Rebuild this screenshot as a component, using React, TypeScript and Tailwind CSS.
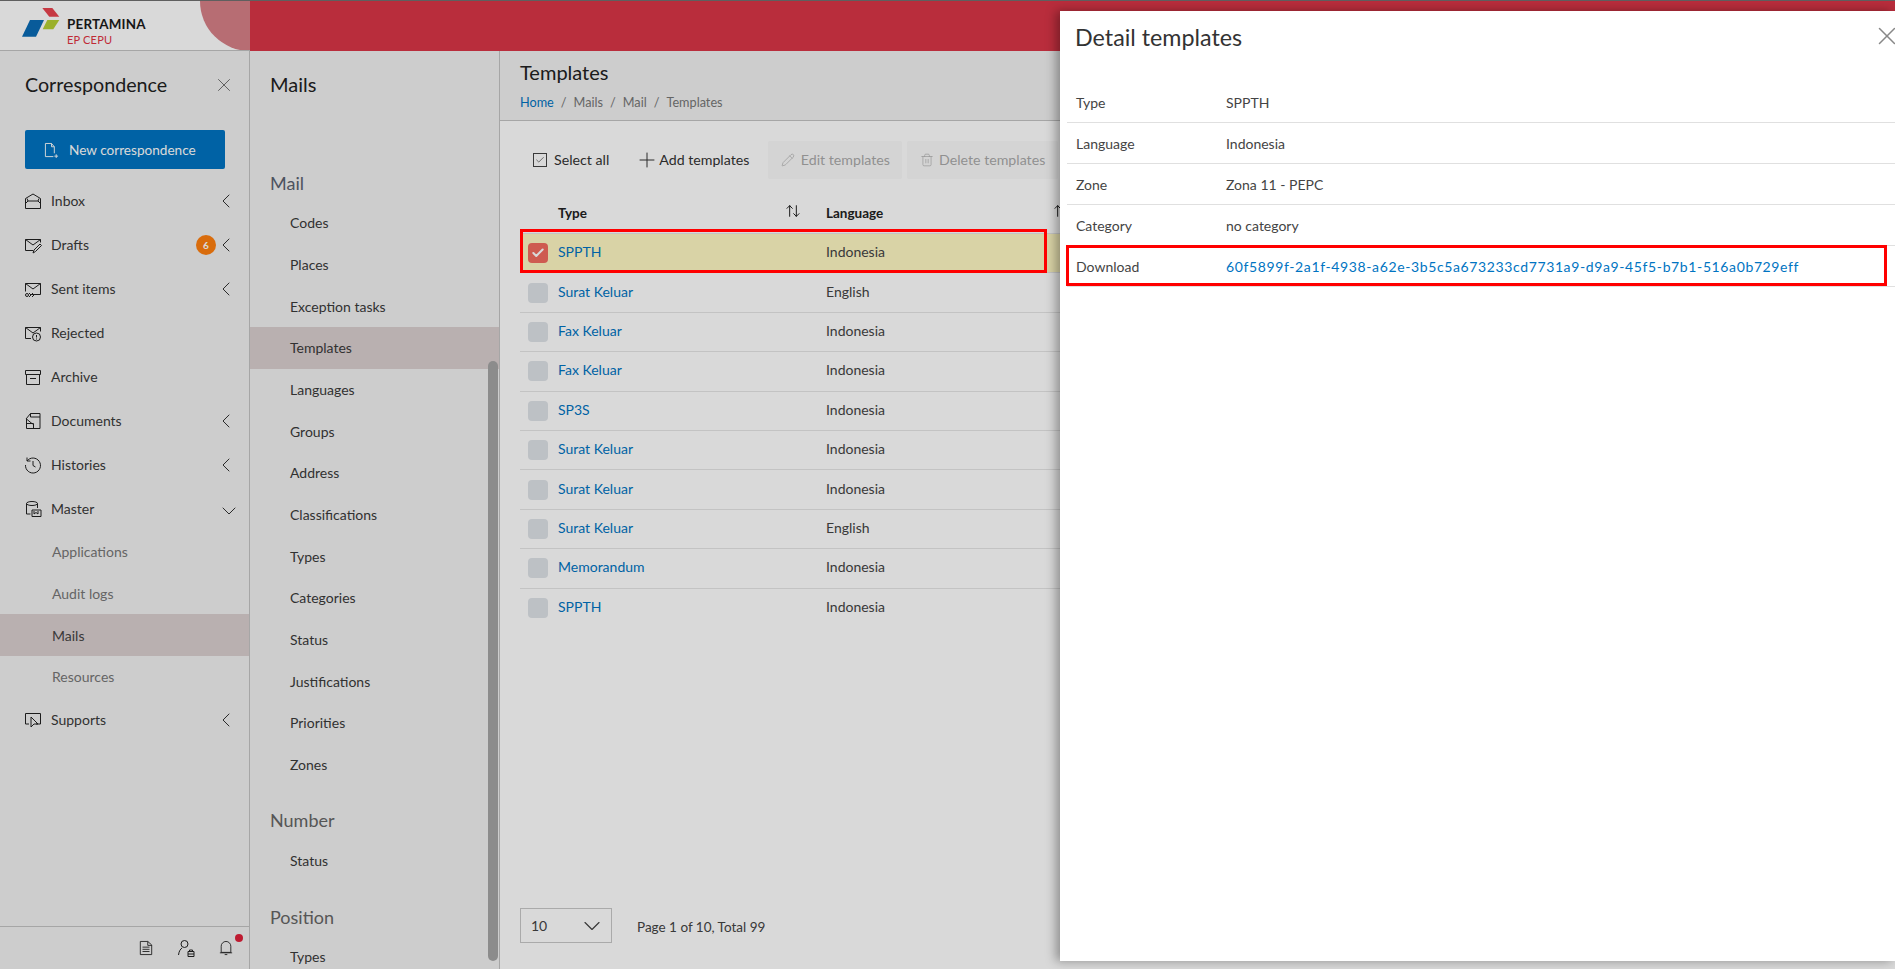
import { ChevronDown, ChevronLeft, Plus, X, ArrowUpDown, Check, Pencil, Trash2 } from "lucide-react";
import type { ReactNode } from "react";

const stroke = { fill: "none", stroke: "currentColor", strokeWidth: 1 };

function Ico({ children }: { children: ReactNode }) {
  return (
    <svg viewBox="0 0 18 18" className="size-[18px] shrink-0" {...stroke}>
      {children}
    </svg>
  );
}

const icons: Record<string, ReactNode> = {
  Inbox: <Ico><path d="M1.5 6.500 9 2l7.500 4.500v10h-15zM1.500 11.500 4 9h10l2.500 2.500M4 9 3 6.500M14 9l1-2.500" /></Ico>,
  Drafts: <Ico><path d="M9 14.500H1.500v-11h15v3M1.500 3.500 9 9l7.500-5.500M9 17l1-3 6-6 1.500 1.500-6 6z" /></Ico>,
  "Sent items": <Ico><path d="M6 14.500h10.500v-11h-15v8M1.500 3.500 9 9l7.500-5.500" /><path d="M5 13l2 2-2 2M8 13l2 2-2 2" /><circle cx="3" cy="15" r="1.500" /></Ico>,
  Rejected: <Ico><path d="M7 14.500H1.500v-11h15v4M1.500 3.500 9 9l7.500-5.500" /><circle cx="12.500" cy="13" r="4" /><path d="M12.500 11v2.500M12.500 14.500v1" /></Ico>,
  Archive: <Ico><path d="M1.500 2.500h15v4h-15zM2.500 6.500v10h13v-10M6 10.500h6" /></Ico>,
  Documents: <Ico><path d="M2 7 6.500 1.500h9.500v15H2.500V7zM6.500 1.500V5h9.500M2.500 7l6 5M2.500 11.500h7v5" /></Ico>,
  Histories: <Ico><path d="M3 5a7.500 7.500 0 1 1-1.500 4M3 1.500V5h3.500M9 5v4.500l2.500 1.500" /></Ico>,
  Master: <Ico><ellipse cx="8" cy="3.500" rx="5.500" ry="2" /><path d="M2.500 3.500V14h4M13.500 3.500V8M8 16.500V10h9v6.500zM10 11v3l2-1.500 2 1.500v-3" /></Ico>,
  Supports: <Ico><path d="M5 13H1.500V2.500h15V13H12M7 6v10l3-3h4z" /></Ico>,
};

const mainNav = [
  { label: "Inbox", chevron: true },
  { label: "Drafts", chevron: true, badge: "6" },
  { label: "Sent items", chevron: true },
  { label: "Rejected" },
  { label: "Archive" },
  { label: "Documents", chevron: true },
  { label: "Histories", chevron: true },
];

const mailLinks = ["Codes", "Places", "Exception tasks", "Templates", "Languages", "Groups", "Address", "Classifications", "Types", "Categories", "Status", "Justifications", "Priorities", "Zones"];

const rows = [
  ["SPPTH", "Indonesia"],
  ["Surat Keluar", "English"],
  ["Fax Keluar", "Indonesia"],
  ["Fax Keluar", "Indonesia"],
  ["SP3S", "Indonesia"],
  ["Surat Keluar", "Indonesia"],
  ["Surat Keluar", "Indonesia"],
  ["Surat Keluar", "English"],
  ["Memorandum", "Indonesia"],
  ["SPPTH", "Indonesia"],
];

const details = [
  ["Type", "SPPTH"],
  ["Language", "Indonesia"],
  ["Zone", "Zona 11 - PEPC"],
  ["Category", "no category"],
];

function Logo() {
  return (
    <div className="flex items-start gap-[7px] pl-[22px] pt-[6px]">
      <svg viewBox="0 0 38 30" className="h-[30px] w-[38px] shrink-0">
        <path d="M20.300 1h10l7 8.700h-10z" fill="#e9444f" />
        <path d="M25.300 13h12l-6 9.300H20.700z" fill="#b5cf33" />
        <path d="M8 13h14l-8 16.700H0z" fill="#0a6cb5" />
      </svg>
      <div className="mt-[10px] flex flex-col">
        <span className="text-[13.400px] font-bold leading-[15px] tracking-[0.2px] text-[#1b1b1b]">PERTAMINA</span>
        <span className="text-[11px] leading-[16px] tracking-[0.2px] text-[#e2333f]">EP CEPU</span>
      </div>
    </div>
  );
}

function Sidebar() {
  return (
    <aside className="flex h-full w-[250px] shrink-0 flex-col border-r border-[#c4c4c4] bg-[#f1f1f1]">
      <div className="flex items-center justify-between pl-[25px] pr-[14px] pt-[20px]">
        <h2 className="text-[19.700px] leading-[28px] text-[#222]">Correspondence</h2>
        <X className="size-[22px] text-[#666]" strokeWidth={1} />
      </div>
      <button type="button" className="ml-[25px] mt-[31px] flex h-[39px] w-[200px] items-center gap-[10px] rounded-[2px] bg-[#0074c2] pl-[19px] pt-[1px] text-[13.600px] text-white">
        <svg viewBox="0 0 16 18" className="h-[17px] w-[15px]" {...stroke}>
          <path d="M10 15.500H1.500v-14H8l3 3.500v7M8 1.500V5h3M13 13v4M11 15h4" />
        </svg>
        New correspondence
      </button>
      <nav className="mt-[10px] flex flex-col text-[14px] text-[#3a3a3a]">
        {mainNav.map((item) => (
          <div key={item.label} className="flex h-[44px] items-center pl-[24px] pr-[11px]">
            <span className="mr-[9px] text-[#222]">{icons[item.label]}</span>
            <span className="flex-1 pb-[1px]">{item.label}</span>
            {item.badge && (
              <span className="-mr-[2px] grid size-[20px] place-items-center rounded-full bg-[#ff7f0f] text-[10px] font-bold text-white">{item.badge}</span>
            )}
            {item.chevron && <ChevronLeft className="size-[24px] text-[#333]" strokeWidth={1} />}
          </div>
        ))}
        <div className="flex h-[44px] items-center pl-[24px] pr-[8px]">
          <span className="mr-[9px] text-[#222]">{icons.Master}</span>
          <span className="flex-1 pb-[1px]">Master</span>
          <ChevronDown className="mt-[3px] size-[24px] text-[#333]" strokeWidth={1} />
        </div>
        <div className="flex flex-col text-[#777]">
          <div className="flex h-[41.700px] items-center pl-[52px]">Applications</div>
          <div className="flex h-[41.700px] items-center pl-[52px]">Audit logs</div>
          <div className="flex h-[41.700px] items-center bg-[#dacfcf] pl-[52px] text-[#444]">Mails</div>
          <div className="flex h-[41.700px] items-center pl-[52px]">Resources</div>
        </div>
        <div className="flex h-[44px] items-center pl-[24px] pr-[11px]">
          <span className="mr-[9px] text-[#222]">{icons.Supports}</span>
          <span className="flex-1">Supports</span>
          <ChevronLeft className="size-[24px] text-[#333]" strokeWidth={1} />
        </div>
      </nav>
      <div className="mt-auto flex h-[43px] items-center justify-end gap-[24px] border-t border-[#c4c4c4] pr-[16px] text-[#222]">
        <svg viewBox="0 0 16 18" className="h-[18px] w-[14px]" {...stroke}>
          <path d="M1.500 1.500H10l4.500 4v11h-13zM10 1.500V6h4.500M4 8h8M4 10.500h8M4 13h8" />
        </svg>
        <svg viewBox="0 0 18 18" className="size-[18px]" {...stroke}>
          <circle cx="7.500" cy="5" r="3.500" />
          <path d="M1.500 16c.500-4 2-6 3.500-7M11 12.500h6v5h-6zM12.500 12.500V11h3v1.500M11 15h6" />
        </svg>
        <div className="relative">
          <svg viewBox="0 0 16 18" className="h-[18px] w-[14px]" {...stroke}>
            <path d="M2.500 14V7a5.500 5.500 0 0 1 11 0v7zM1 14.500h14M6.500 16.500h3" />
          </svg>
          <span className="absolute -right-[10px] -top-[5px] size-[8px] rounded-full bg-[#e0203a]" />
        </div>
      </div>
    </aside>
  );
}

function SubNav() {
  return (
    <aside className="relative h-full w-[250px] shrink-0 overflow-hidden border-r border-[#c4c4c4] bg-[#f1f1f1]">
      <h2 className="pl-[20px] pt-[19px] text-[20px] leading-[28px] text-[#222]">Mails</h2>
      <h3 className="mt-[71px] pl-[20px] text-[18px] leading-[28px] text-[#5a6270]">Mail</h3>
      <div className="mt-[5px] flex flex-col text-[14px] text-[#3a3a3a]">
        {mailLinks.map((link) => (
          <div key={link} className={`flex h-[41.670px] items-center pl-[40px] ${link === "Templates" ? "bg-[#dacfcf]" : ""}`}>
            {link}
          </div>
        ))}
      </div>
      <h3 className="mt-[21px] pl-[20px] text-[18px] leading-[28px] text-[#666]">Number</h3>
      <div className="mt-[5px] flex h-[41.670px] items-center pl-[40px] text-[14px] text-[#3a3a3a]">Status</div>
      <h3 className="mt-[22px] pl-[20px] text-[18px] leading-[28px] text-[#666]">Position</h3>
      <div className="mt-[5px] flex h-[41.670px] items-center pl-[40px] text-[14px] text-[#3a3a3a]">Types</div>
      <div className="absolute bottom-[8px] right-[1px] top-[310px] w-[10px] rounded-[5px] bg-[#a5a5a5]" />
    </aside>
  );
}

function Templates() {
  return (
    <main className="flex h-full flex-1 flex-col bg-white">
      <header className="h-[70px] border-b border-[#c4c4c4] bg-[#f1f1f1] pl-[20px] pt-[7px]">
        <h1 className="text-[20px] leading-[28px] text-[#222]">Templates</h1>
        <div className="mt-[8px] flex gap-[7px] text-[12.700px] leading-[16px] text-[#777]">
          <span className="text-[#0074c2]">Home</span><span>/</span><span>Mails</span><span>/</span><span>Mail</span><span>/</span><span>Templates</span>
        </div>
      </header>
      <div className="flex items-center pl-[33px] pt-[20px] text-[14.200px] text-[#333]">
        <span className="flex h-[38px] items-center gap-[7px]">
          <span className="grid size-[14px] place-items-center border border-[#444]"><Check className="size-[10px]" strokeWidth={1.500} /></span>
          Select all
        </span>
        <span className="ml-[26px] flex h-[38px] items-center">
          <Plus className="size-[24px]" strokeWidth={1} />
          Add templates
        </span>
        <span className="ml-[19px] flex h-[38px] items-center gap-[6px] rounded-[2px] bg-[#fafafa] px-[12.500px] text-[#aaa]">
          <Pencil className="size-[14px]" strokeWidth={1.100} />
          Edit templates
        </span>
        <span className="ml-[5px] flex h-[38px] items-center gap-[5px] rounded-[2px] bg-[#fafafa] px-[12.500px] text-[#aaa]">
          <Trash2 className="size-[14px]" strokeWidth={1.100} />
          Delete templates
        </span>
      </div>
      <div className="mx-[20px] mt-[15px] text-[14px]">
        <div className="flex h-[39px] items-center text-[13.500px] font-bold text-[#222]">
          <div className="relative w-[306px] pl-[38px]">
            Type
            <ArrowUpDown className="absolute right-[25px] top-0 size-[16px]" strokeWidth={1.500} />
          </div>
          <div className="relative flex-1">
            Language
            <ArrowUpDown className="absolute left-[227px] top-0 size-[16px]" strokeWidth={1.500} />
          </div>
        </div>
        {rows.map((row, i) => (
          <div key={i} className={`flex h-[39.400px] items-center border-t border-[#e5e5e5] ${i === 0 ? "bg-[#fff8c4]" : ""}`}>
            <div className="flex w-[306px] items-center">
              <span className={`ml-[8px] mr-[10px] grid size-[20px] place-items-center rounded-[4px] ${i === 0 ? "bg-[#f26b5f]" : "bg-[#dfe3e8]"}`}>
                {i === 0 && <Check className="size-[14px] text-white" strokeWidth={3.500} />}
              </span>
              <span className="pb-[3px] text-[#0074c2]">{row[0]}</span>
            </div>
            <div className="pb-[3px] text-[#444]">{row[1]}</div>
          </div>
        ))}
      </div>
      <div className="mb-[26px] ml-[20px] mt-auto flex items-center gap-[25px] text-[13.500px] text-[#444]">
        <div className="flex h-[35px] w-[92px] items-center justify-between border border-[#c8c8c8] pl-[10px] pr-[5px] text-[14px]">
          10
          <ChevronDown className="size-[28px]" strokeWidth={1} />
        </div>
        <span className="mt-[3px]">Page 1 of 10, Total 99</span>
      </div>
    </main>
  );
}

function DetailDrawer() {
  return (
    <section className="absolute bottom-[8px] left-[1060px] right-0 top-[11px] bg-white pl-[7px] shadow-[-4px_0_10px_rgba(0,0,0,0.35)]">
      <div className="flex items-center justify-between pl-[8px] pt-[11px]">
        <h2 className="text-[23.300px] leading-[30px] text-[#333]">Detail templates</h2>
        <X className="-mr-[7px] -mt-[2px] size-[30px] text-[#888]" strokeWidth={1.200} />
      </div>
      <div className="mt-[30px] text-[14px] text-[#444]">
        {details.map(([label, value]) => (
          <div key={label} className="flex h-[41px] items-center border-b border-[#e0e0e0] pl-[9px]">
            <span className="w-[150px]">{label}</span>
            <span>{value}</span>
          </div>
        ))}
        <div className="flex h-[41px] items-center border-b border-[#e0e0e0] pl-[9px]">
          <span className="w-[150px]">Download</span>
          <span className="tracking-[0.62px] text-[#0074c2]">60f5899f-2a1f-4938-a62e-3b5c5a673233cd7731a9-d9a9-45f5-b7b1-516a0b729eff</span>
        </div>
      </div>
      <div className="absolute left-[6px] top-[234px] h-[41px] w-[821px] border-[3px] border-[#ff0000]" />
    </section>
  );
}

export default function App() {
  return (
    <div className="relative flex h-[969px] w-[1895px] flex-col overflow-hidden font-['Lato','Noto_Sans',sans-serif]">
      <div className="flex h-[51px] shrink-0 border-t border-[#707070] bg-white">
        <div className="relative w-[250px] overflow-hidden border-b border-[#c4c4c4]">
          <Logo />
          <div className="absolute right-0 top-0 size-[100px] -translate-y-[50px] translate-x-[50px] rounded-full bg-[#d78188]" />
        </div>
        <div className="flex-1 bg-[#da3547]" />
      </div>
      <div className="flex min-h-0 flex-1">
        <Sidebar />
        <SubNav />
        <Templates />
      </div>
      <div className="absolute inset-0 bg-black/15" />
      <div className="absolute left-[520px] top-[229px] h-[44px] w-[527px] border-[3px] border-[#ff0000]" />
      <DetailDrawer />
    </div>
  );
}
